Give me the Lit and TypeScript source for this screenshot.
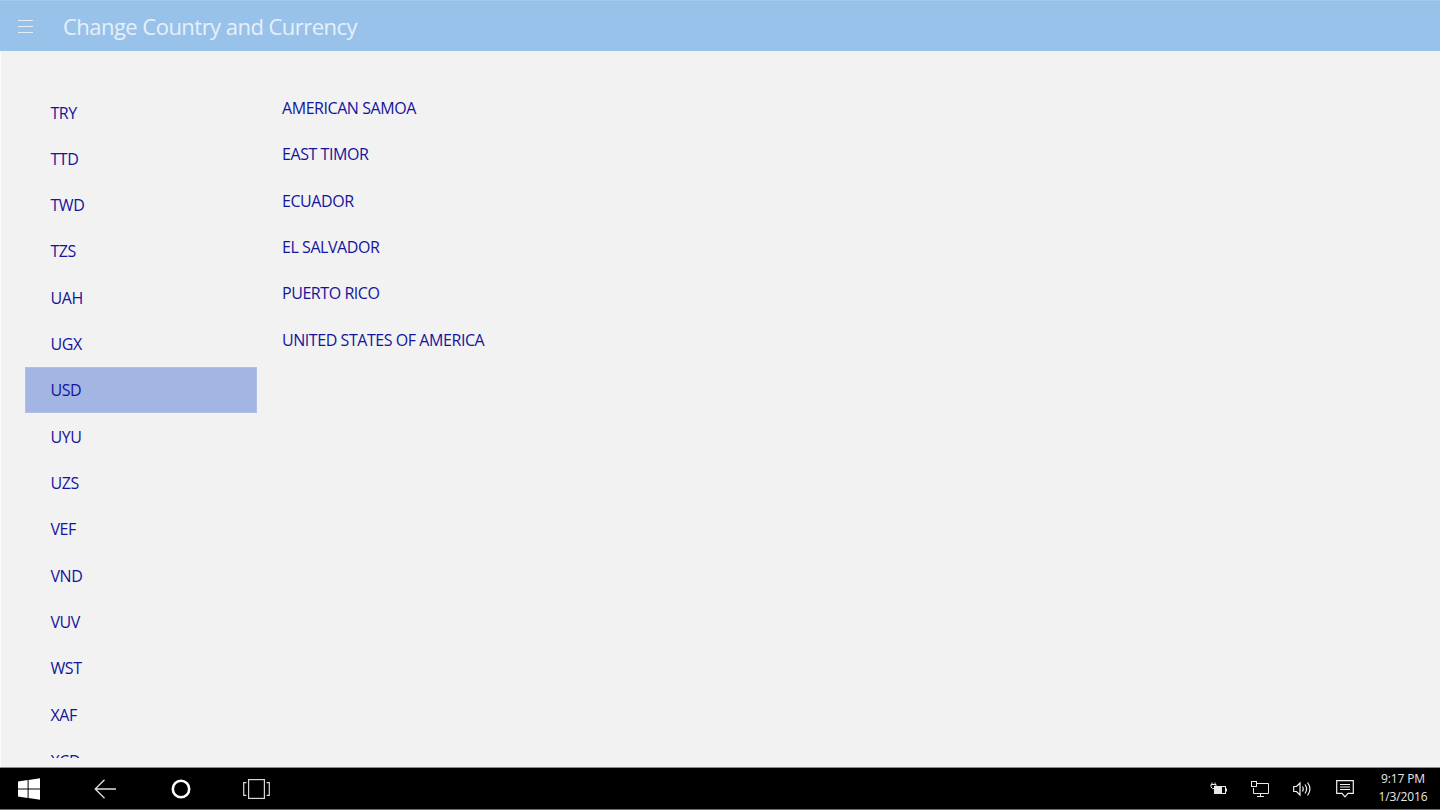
import { LitElement, html, css, svg } from "lit";
import { customElement } from "lit/decorators.js";

const CODES = ["TRY","TTD","TWD","TZS","UAH","UGX","USD","UYU","UZS","VEF","VND","VUV","WST","XAF","XCD"];
const COUNTRIES = ["AMERICAN SAMOA","EAST TIMOR","ECUADOR","EL SALVADOR","PUERTO RICO","UNITED STATES OF AMERICA"];

@customElement("app-root")
export class AppRoot extends LitElement {
  static styles = css`
    :host { display: flex; flex-direction: column; width: 1440px; height: 810px; overflow: hidden; background: #f2f2f2;
      font-family: "Open Sans", "Noto Sans", sans-serif; color: #14149c; }
    .header { flex: 0 0 51px; box-sizing: border-box; height: 51px; background: #99c2ea; border-top: 1px solid #a6caee; display: flex; align-items: center; color: #e6f0fa; }
    .burger { flex: 0 0 63px; display: flex; padding-left: 18px; box-sizing: border-box; }
    .title { font-size: 22px; letter-spacing: -0.53px; font-weight: 400; margin-top: -1px; white-space: nowrap; }
    .main { flex: 1 1 0; min-height: 0; display: flex; border-left: 1px solid #fbfbfb; padding-left: 24px; }
    .codes { flex: 0 0 232px; box-sizing: border-box; height: 707px; padding-top: 38px; overflow: hidden; }
    .row { box-sizing: border-box; height: 46.33px; display: flex; align-items: center; font-size: 16px; letter-spacing: -0.44px; white-space: nowrap; }
    .codes .row { padding-left: 25.5px; padding-top: 0.7px; }
    .codes .row.sel { background: #a2b5e3; box-shadow: inset 0 0 0 1px #afc0e8; }
    .countries { padding: 34px 0 0 25px; }
    .taskbar { flex: 0 0 43px; box-sizing: border-box; height: 43px; background: #000; border-top: 1px solid #8c8c8c; border-bottom: 1px solid #6e6e6e; display: flex; align-items: center; color: #e6e6e6; }
    .nav { display: flex; align-items: center; width: 1200px; }
    .nav svg { display: block; }
    .start { margin-left: 18px; }
    .back { margin-left: 54px; }
    .home { margin-left: 55px; }
    .task { margin-left: 52px; }
    .tray { display: flex; align-items: center; flex: 1; }
    .tray svg { display: block; }
    .t1 { margin-left: 9px; }
    .t2 { margin-left: 24px; }
    .t3 { margin-left: 24px; }
    .t4 { margin-left: 25px; }
    .clock { margin-left: 19px; width: 60px; margin-top: -1px; text-align: center; font-size: 12px; line-height: 18px; letter-spacing: -0.15px; color: #e8e8e8; }
  `;

  render() {
    return html`
      <div class="header">
        <div class="burger">
          <svg width="16" height="15" viewBox="0 0 16 15" fill="none" stroke="#e4eef9" stroke-width="1"><path d="M0 1.500H15M0 7.500H15M0 13.500H15"/></svg>
        </div>
        <div class="title">Change Country and Currency</div>
      </div>
      <div class="main">
        <div class="codes">
          ${CODES.map((c) => html`<div class="row ${c === "USD" ? "sel" : ""}">${c}</div>`)}
        </div>
        <div class="countries">
          ${COUNTRIES.map((c) => html`<div class="row">${c}</div>`)}
        </div>
      </div>
      <div class="taskbar">
        <div class="nav">
          <svg class="start" width="22" height="22" viewBox="0 0 22 22" fill="#fff"><path d="M0 3.400 9.600 2v8.400H0zM10.600 1.900 22 .2v10.200H10.600zM0 11.500h9.600V20L0 18.600zM10.600 11.500H22v10.300L10.600 20.100z"/></svg>
          <svg class="back" width="22" height="20" viewBox="0 0 22 20" fill="none" stroke="#e0e0e0" stroke-width="1.300"><path d="M22 10H1.200M10.500 .8 1.200 10l9.300 9.200"/></svg>
          <svg class="home" width="20" height="20" viewBox="0 0 20 20" fill="none" stroke="#fff" stroke-width="2.600"><circle cx="10" cy="10" r="8.200"/></svg>
          <svg class="task" width="27" height="20" viewBox="0 0 27 20" fill="none" stroke="#d8d8d8" stroke-width="1.200"><rect x="5.600" y=".6" width="15.800" height="18.800"/><path d="M3.400 3.600H.7v12.800h2.700M23.600 3.600h2.700v12.800h-2.700"/></svg>
        </div>
        <div class="tray">
          <svg class="t1" width="18" height="14" viewBox="0 0 18 14" fill="none" stroke="#e8e8e8">${svg`<rect x="5.500" y="4.500" width="11" height="7"/><path d="M17.500 6.500v3"/><rect x="5" y="5" width="8" height="6" fill="#e8e8e8" stroke="none"/><path d="M3 .5v2M6 .5v2M2 2.500h5v2.500l-1.500 1.500h-2L2 5z"/>`}</svg>
          <svg class="t2" width="18" height="16" viewBox="0 0 18 16" fill="none" stroke="#e8e8e8">${svg`<path d="M6 2.500h11.500v10H2.500V7M9.500 12.500v3M6 15.500h7"/><rect x=".5" y=".5" width="5" height="5"/>`}</svg>
          <svg class="t3" width="18" height="16" viewBox="0 0 18 16" fill="none" stroke="#f0f0f0" stroke-width="1.200">${svg`<path d="M.7 5.500h2.800l3.500-3.500v12l-3.500-3.500H.7z"/><path d="M9.500 5.500c1 1.700 1 3.300 0 5M12 3.500c2 2.800 2 6.200 0 9M14.500 1.500c3 4 3 9 0 13"/>`}</svg>
          <svg class="t4" width="18" height="18" viewBox="0 0 18 18" fill="none" stroke="#f0f0f0" stroke-width="1.200">${svg`<path d="M.7.7h16.600v12.600h-5.300L9 16.800 6 13.300H.7z"/><path d="M4 4.500h10M4 7h10M4 9.500h10"/>`}</svg>
          <div class="clock">9:17 PM<br />1/3/2016</div>
        </div>
      </div>
    `;
  }
}
